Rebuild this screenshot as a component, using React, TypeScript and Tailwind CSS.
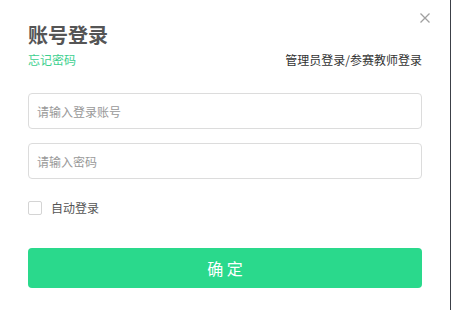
import { useState } from "react";

export default function App() {
  const [auto, setAuto] = useState(false);

  return (
    <div className="flex h-[310px] w-[451px] bg-white" style={{ fontFamily: '"Noto Sans CJK SC", "Noto Sans", sans-serif' }}>
      <div className="relative flex w-[450px] flex-col px-[28px] pt-[20px]">
        <button className="absolute right-[19px] top-[12px] text-[#a0a0a0]" aria-label="关闭">
          <svg width="12" height="12" viewBox="0 0 12 12" fill="none" stroke="currentColor" strokeWidth="1.3">
            <path d="M1.5 1.5l9 9M10.5 1.5l-9 9" />
          </svg>
        </button>

        <h1 className="text-[20px] font-bold leading-[30px] text-[#555]">账号登录</h1>
        <div className="mt-[2px] flex items-center justify-between text-[12px] leading-[16px]">
          <a className="text-[#3ccf8e]">忘记密码</a>
          <a className="text-[#333]">管理员登录/参赛教师登录</a>
        </div>

        <input
          className="mt-[25px] h-[36px] w-full rounded-[4px] border border-[#dcdcdc] px-[8px] text-[12px] outline-none placeholder:text-[#999]"
          placeholder="请输入登录账号"
        />
        <input
          type="password"
          className="mt-[14px] h-[36px] w-full rounded-[4px] border border-[#dcdcdc] px-[8px] text-[12px] outline-none placeholder:text-[#999]"
          placeholder="请输入密码"
        />

        <label className="mt-[21px] flex items-center gap-[9px] text-[12px] leading-[16px] text-[#555]">
          <span
            onClick={() => setAuto(!auto)}
            className={auto ? "h-[14px] w-[14px] rounded-[2px] border border-[#29d98d] bg-[#29d98d]" : "h-[14px] w-[14px] rounded-[2px] border border-[#d4d4d4] bg-white"}
          />
          自动登录
        </label>

        <button className="mt-[32px] h-[40px] w-full rounded-[4px] bg-[#2ad98c] text-[16px] text-white">
          确 定
        </button>
      </div>
      <div className="w-px bg-[#3c4048]" />
    </div>
  );
}
